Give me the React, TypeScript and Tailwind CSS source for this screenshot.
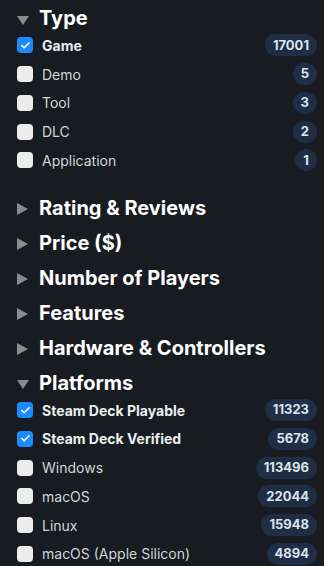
import { Check } from "lucide-react";

type Item = { label: string; count: number; checked?: boolean };
type Section = { title: string; open: boolean; items?: Item[] };

const sections: Section[] = [
  {
    title: "Type",
    open: true,
    items: [
      { label: "Game", count: 17001, checked: true },
      { label: "Demo", count: 5 },
      { label: "Tool", count: 3 },
      { label: "DLC", count: 2 },
      { label: "Application", count: 1 },
    ],
  },
  { title: "Rating & Reviews", open: false },
  { title: "Price ($)", open: false },
  { title: "Number of Players", open: false },
  { title: "Features", open: false },
  { title: "Hardware & Controllers", open: false },
  {
    title: "Platforms",
    open: true,
    items: [
      { label: "Steam Deck Playable", count: 11323, checked: true },
      { label: "Steam Deck Verified", count: 5678, checked: true },
      { label: "Windows", count: 113496 },
      { label: "macOS", count: 22044 },
      { label: "Linux", count: 15948 },
      { label: "macOS (Apple Silicon)", count: 4894 },
    ],
  },
];

function Caret({ open }: { open: boolean }) {
  return open ? (
    <svg width="12" height="9" viewBox="0 0 12 9" className="mt-[4px]">
      <path d="M0 0H12L6 9Z" fill="#8b8b8b" />
    </svg>
  ) : (
    <svg width="11" height="12" viewBox="0 0 11 12" className="mt-[2px]">
      <path d="M0 0L11 6L0 12Z" fill="#8b8b8b" />
    </svg>
  );
}

export default function App() {
  return (
    <div
      className="min-h-screen bg-[#181b21] pl-[17px] pr-[7px] pt-[5px] text-[#d4d6da]"
      style={{ fontFamily: "Inter, 'Noto Sans', sans-serif" }}
    >
      {sections.map((s) => (
        <div key={s.title} className={s.open ? "mb-[20px]" : "mb-[9px]"}>
          <div className="flex h-[26px] items-center">
            <div className="flex w-[22px] shrink-0 items-center">
              <Caret open={s.open} />
            </div>
            <h2 className="text-[20px] font-bold leading-none text-white">{s.title}</h2>
          </div>
          {s.open && (
            <ul>
              {s.items!.map((it) => (
                <li key={it.label} className="flex h-[28.75px] items-center">
                  <span
                    className={
                      "flex h-4 w-4 shrink-0 items-center justify-center rounded-[4px] " +
                      (it.checked ? "bg-[#1a8cff]" : "bg-[#ececec]")
                    }
                  >
                    {it.checked && <Check size={11} strokeWidth={3.5} className="text-white" />}
                  </span>
                  <span
                    className={
                      "ml-[9px] flex-1 text-[14px] " +
                      (it.checked ? "font-bold text-[#eceef0]" : "text-[#d2d4d8]")
                    }
                  >
                    {it.label}
                  </span>
                  <span className="flex h-[22px] min-w-[22px] items-center justify-center rounded-full bg-[#1f2e44] px-[8px] text-[13px] font-bold text-[#dbe3ec]">
                    {it.count}
                  </span>
                </li>
              ))}
            </ul>
          )}
        </div>
      ))}
    </div>
  );
}
